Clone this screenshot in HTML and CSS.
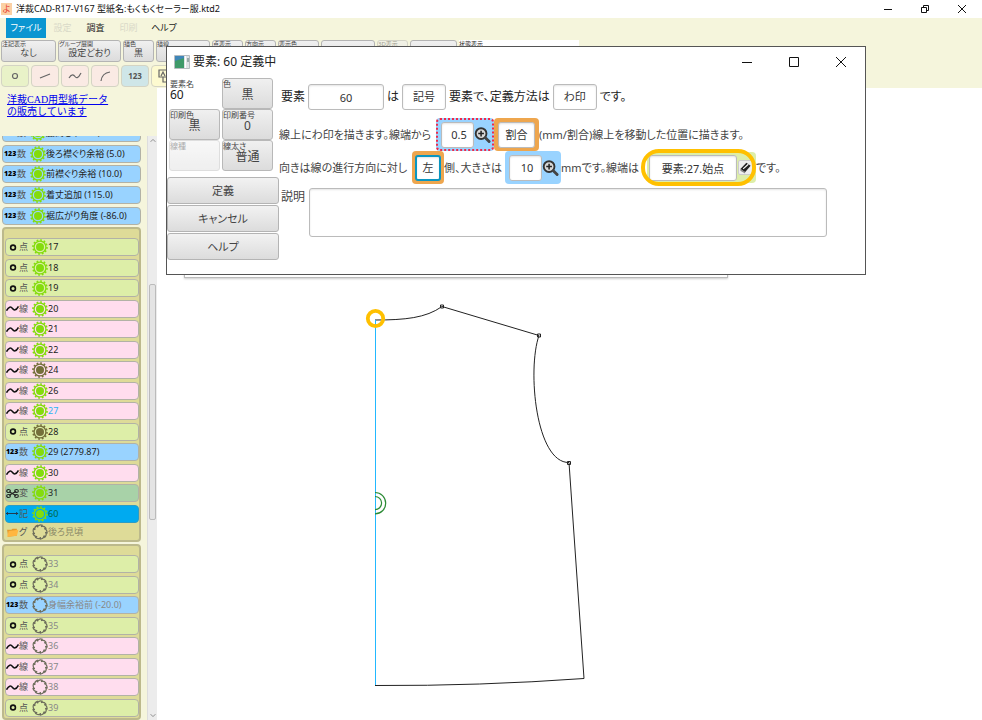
FILE: index.html
```html
<!DOCTYPE html>
<html lang="ja">
<head>
<meta charset="utf-8">
<title>洋裁CAD-R17-V167 型紙名:もくもくセーラー服.ktd2</title>
<link rel="stylesheet" href="styles.css">
</head>
<body>
<svg class="defs" aria-hidden="true">
  <symbol id="sun" viewBox="0 0 16 16">
    <circle cx="8" cy="8" r="7" fill="none" stroke="currentColor" stroke-width="1.6" stroke-dasharray="1.75 1.91"/>
    <circle cx="8" cy="8" r="5.9" fill="none" stroke="currentColor" stroke-width="1.3"/>
    <circle cx="8" cy="8" r="4" fill="currentColor"/>
  </symbol>
  <symbol id="off" viewBox="0 0 16 16">
    <g fill="none" stroke="currentColor" stroke-width="1.2">
      <path id="tooth" d="M5 2.800Q7.500.300 10.200 1.200L9.300 3"/>
      <use href="#tooth" transform="rotate(40 8 8)"/>
      <use href="#tooth" transform="rotate(80 8 8)"/>
      <use href="#tooth" transform="rotate(120 8 8)"/>
      <use href="#tooth" transform="rotate(160 8 8)"/>
      <use href="#tooth" transform="rotate(200 8 8)"/>
      <use href="#tooth" transform="rotate(240 8 8)"/>
      <use href="#tooth" transform="rotate(280 8 8)"/>
      <use href="#tooth" transform="rotate(320 8 8)"/>
    </g>
  </symbol>
  <symbol id="point" viewBox="0 0 12 10"><circle cx="6.500" cy="5" r="2.200" fill="none" stroke="#111" stroke-width="1.500"/></symbol>
  <symbol id="wave" viewBox="0 0 12 10"><path d="M.5 7C2.500 3 4.500 3 6 5s3.200 2 5.500-2" fill="none" stroke="#111" stroke-width="1.400"/></symbol>
  <symbol id="cut" viewBox="0 0 14 10"><path d="M3.500 3.200 11 7.500M3.500 6.800 11 2.500" fill="none" stroke="#222" stroke-width="1.300"/><g fill="none" stroke="#222" stroke-width="1.200"><ellipse cx="2.700" cy="2.300" rx="2" ry="1.600"/><ellipse cx="2.700" cy="7.700" rx="2" ry="1.600"/><ellipse cx="11.300" cy="2.300" rx="2" ry="1.600"/><ellipse cx="11.300" cy="7.700" rx="2" ry="1.600"/></g></symbol>
  <symbol id="arrow" viewBox="0 0 14 10"><path d="M0 5h13M2 3.500.5 5 2 6.500M11 3.500 12.500 5 11 6.500" fill="none" stroke="#234" stroke-width="1"/></symbol>
  <symbol id="folder" viewBox="0 0 12 10"><path d="M1 2.500h4l1-1h4V8L2 9z" fill="#e39a2c"/><path d="M1 9 2.500 3.500l9-1L10 8z" fill="#ffb640"/></symbol>
  <symbol id="lens" viewBox="0 0 18 18"><circle cx="7.500" cy="7.500" r="5.700" fill="#d9d9d9" stroke="#333" stroke-width="2"/><path d="M4.500 7.500h6M7.500 4.500v6" stroke="#222" stroke-width="1.600"/><path d="m12 12 4 4" stroke="#444" stroke-width="3" stroke-linecap="round"/></symbol>
</svg>

<header class="app-head">
  <div class="titlebar">
    <span class="logo">よ</span>
    <h1>洋裁CAD-R17-V167 型紙名:もくもくセーラー服.ktd2</h1>
    <div class="win-controls">
      <button aria-label="最小化"><svg viewBox="0 0 10 10"><path d="M1 5.500h8"/></svg></button>
      <button aria-label="元に戻す"><svg viewBox="0 0 10 10"><path d="M1.500 3.500h5v5h-5zM3.500 3.500v-2h5v5h-2"/></svg></button>
      <button aria-label="閉じる"><svg viewBox="0 0 10 10"><path d="m1 1 8 8M9 1 1 9"/></svg></button>
    </div>
  </div>
  <nav class="menu">
    <button class="active">ファイル</button>
    <button disabled>設定</button>
    <button>調査</button>
    <button disabled>印刷</button>
    <button>ヘルプ</button>
  </nav>
  <div class="options">
    <button class="opt o1"><small>注記表示</small>なし</button>
    <button class="opt o2"><small>グループ展開</small>設定どおり</button>
    <button class="opt o3"><small>描色</small>黒</button>
    <button class="opt o4"><small>描線</small></button>
    <button class="opt o3"><small>点表示</small></button>
    <button class="opt o3"><small>方向示</small></button>
    <button class="opt o5"><small>表示色</small></button>
    <button class="opt o4" aria-label="表示"></button>
    <button class="opt o3" disabled><small>3D表示</small></button>
    <button class="opt o6" aria-label="状態"></button>
    <div class="status"><small>状態表示</small></div>
  </div>
  <div class="tools">
    <button class="tool green" aria-label="点"><svg viewBox="0 0 16 16"><circle cx="8" cy="8" r="2.500"/></svg></button>
    <button class="tool pink" aria-label="直線"><svg viewBox="0 0 16 16"><path d="m3 10 10-4"/></svg></button>
    <button class="tool pink" aria-label="曲線"><svg viewBox="0 0 16 16"><path d="M2 10c3-5 5-3 6-1.500S11 11 14 5"/></svg></button>
    <button class="tool pink" aria-label="円弧"><svg viewBox="0 0 16 16"><path d="M4 13Q5 5 13 4"/></svg></button>
    <button class="tool blue">123</button>
    <button class="tool yellow" aria-label="注記"><svg viewBox="0 0 16 16"><path d="M2 2h8v7H2zM6 9v5h8V6h-4M4 8l2-4 2 4"/></svg></button>
  </div>
</header>

<div class="work">
  <aside class="side">
    <a class="promo" href="#">洋裁CAD用型紙データ<br>の販売しています</a>
    <div class="browser">
      <div class="lists">
        <ul class="list top">
          <li><button class="row num"><b>123</b><i>数</i><svg class="mark"><use href="#sun"/></svg>脇高さ (-10.0)</button></li>
          <li><button class="row num"><b>123</b><i>数</i><svg class="mark"><use href="#sun"/></svg>後ろ襟ぐり余裕 (5.0)</button></li>
          <li><button class="row num"><b>123</b><i>数</i><svg class="mark"><use href="#sun"/></svg>前襟ぐり余裕 (10.0)</button></li>
          <li><button class="row num"><b>123</b><i>数</i><svg class="mark"><use href="#sun"/></svg>着丈追加 (115.0)</button></li>
          <li><button class="row num"><b>123</b><i>数</i><svg class="mark"><use href="#sun"/></svg>裾広がり角度 (-86.0)</button></li>
        </ul>
        <section class="group">
          <ul class="list first">
            <li><button class="row pt"><svg class="kind"><use href="#point"/></svg><i>点</i><svg class="mark"><use href="#sun"/></svg>17</button></li>
            <li><button class="row pt"><svg class="kind"><use href="#point"/></svg><i>点</i><svg class="mark"><use href="#sun"/></svg>18</button></li>
            <li><button class="row pt"><svg class="kind"><use href="#point"/></svg><i>点</i><svg class="mark"><use href="#sun"/></svg>19</button></li>
            <li><button class="row ln"><svg class="kind"><use href="#wave"/></svg><i>線</i><svg class="mark"><use href="#sun"/></svg>20</button></li>
            <li><button class="row ln"><svg class="kind"><use href="#wave"/></svg><i>線</i><svg class="mark"><use href="#sun"/></svg>21</button></li>
            <li><button class="row ln"><svg class="kind"><use href="#wave"/></svg><i>線</i><svg class="mark"><use href="#sun"/></svg>22</button></li>
            <li><button class="row ln"><svg class="kind"><use href="#wave"/></svg><i>線</i><svg class="mark dim"><use href="#sun"/></svg>24</button></li>
            <li><button class="row ln"><svg class="kind"><use href="#wave"/></svg><i>線</i><svg class="mark"><use href="#sun"/></svg>26</button></li>
            <li><button class="row ln"><svg class="kind"><use href="#wave"/></svg><i>線</i><svg class="mark"><use href="#sun"/></svg><span class="cyan">27</span></button></li>
            <li><button class="row pt"><svg class="kind"><use href="#point"/></svg><i>点</i><svg class="mark dim"><use href="#sun"/></svg>28</button></li>
            <li><button class="row num"><b>123</b><i>数</i><svg class="mark"><use href="#sun"/></svg>29 (2779.87)</button></li>
            <li><button class="row ln"><svg class="kind"><use href="#wave"/></svg><i>線</i><svg class="mark"><use href="#sun"/></svg>30</button></li>
            <li><button class="row cv"><svg class="kind"><use href="#cut"/></svg><i>変</i><svg class="mark"><use href="#sun"/></svg>31</button></li>
            <li><button class="row current"><svg class="kind"><use href="#arrow"/></svg><i>記</i><svg class="mark"><use href="#sun"/></svg>60</button></li>
          </ul>
          <button class="row name"><svg class="kind"><use href="#folder"/></svg><i>グ</i><svg class="mark off"><use href="#off"/></svg>後ろ見頃</button>
        </section>
        <section class="group">
          <ul class="list second">
            <li><button class="row pt hid"><svg class="kind"><use href="#point"/></svg><i>点</i><svg class="mark off"><use href="#off"/></svg>33</button></li>
            <li><button class="row pt hid"><svg class="kind"><use href="#point"/></svg><i>点</i><svg class="mark off"><use href="#off"/></svg>34</button></li>
            <li><button class="row num hid"><b>123</b><i>数</i><svg class="mark off"><use href="#off"/></svg>身幅余裕前 (-20.0)</button></li>
            <li><button class="row pt hid"><svg class="kind"><use href="#point"/></svg><i>点</i><svg class="mark off"><use href="#off"/></svg>35</button></li>
            <li><button class="row ln hid"><svg class="kind"><use href="#wave"/></svg><i>線</i><svg class="mark off"><use href="#off"/></svg>36</button></li>
            <li><button class="row ln hid"><svg class="kind"><use href="#wave"/></svg><i>線</i><svg class="mark off"><use href="#off"/></svg>37</button></li>
            <li><button class="row ln hid"><svg class="kind"><use href="#wave"/></svg><i>線</i><svg class="mark off"><use href="#off"/></svg>38</button></li>
            <li><button class="row pt hid"><svg class="kind"><use href="#point"/></svg><i>点</i><svg class="mark off"><use href="#off"/></svg>39</button></li>
          </ul>
        </section>
      </div>
      <div class="scroll">
        <svg viewBox="0 0 10 10"><path d="m2 6 3-3 3 3"/></svg>
        <span class="thumb"></span>
        <svg viewBox="0 0 10 10"><path d="m2 4 3 3 3-3"/></svg>
      </div>
    </div>
  </aside>

  <main class="canvas">
    <svg width="825" height="632" viewBox="157 88 825 632" role="img" aria-label="型紙">
      <g fill="none" stroke="#222" stroke-width="1">
        <path d="M375 320C405 320 426 318 442 306.500L539 335.500C527 370 536 463 569 462.500L584 678.500Q480 686 375 685.500"/>
        <path d="M440.500 305h3v3h-3zM537.500 334h3v3h-3zM567.500 461.500h3v3h-3z"/>
      </g>
      <rect x="375" y="320" width="1" height="365" fill="#22b8ff"/>
      <path d="M375 492.500a10.700 10.700 0 0 1 0 21.400M375 496.500a6.600 6.600 0 0 1 0 13.200" fill="none" stroke="#2a8a34" stroke-width="1.200"/>
      <circle cx="375.500" cy="318.500" r="7.700" fill="none" stroke="#ffc000" stroke-width="3.800"/>
    </svg>
  </main>
</div>

<div class="under"></div>
<section class="dialog" role="dialog" aria-labelledby="dlg-title">
  <div class="dlg-bar">
    <svg class="dlg-icon" viewBox="0 0 16 14"><path fill="#dfe3e6" stroke="#b6bcc0" d="M.5.5h15v13H.5z"/><path fill="#3f86b8" d="M1 1h9v6H1z"/><path fill="#3f9a6a" d="M1 6l9-3v10H1z"/><path fill="#fff" d="M11 1h1v12h-1z"/><path fill="#9aa" d="M13 3h2v4h-2z"/></svg>
    <h2 id="dlg-title">要素: 60 定義中</h2>
    <div class="dlg-controls">
      <button aria-label="最小化"><svg viewBox="0 0 12 12"><path d="M1 6.500h10"/></svg></button>
      <button aria-label="最大化"><svg viewBox="0 0 12 12"><path d="M1.500 1.500h9v9h-9z"/></svg></button>
      <button aria-label="閉じる"><svg viewBox="0 0 12 12"><path d="m1 1 10 10M11 1 1 11"/></svg></button>
    </div>
  </div>
  <div class="dlg-body">
    <div class="left">
      <div class="props">
        <div class="prop plain"><small>要素名</small>60</div>
        <button class="prop"><small>色</small>黒</button>
        <button class="prop"><small>印刷色</small>黒</button>
        <button class="prop"><small>印刷番号</small>0</button>
        <button class="prop" disabled><small>線種</small></button>
        <button class="prop"><small>線太さ</small>普通</button>
      </div>
      <div class="actions">
        <button>定義</button>
        <button>キャンセル</button>
        <button>ヘルプ</button>
      </div>
    </div>
    <form class="form">
      <div class="line l1">
        <label for="elem">要素</label>
        <input id="elem" class="w-l" value="60">
        <span>は</span>
        <button type="button" class="pick">記号</button>
        <span>要素で、定義方法は</span>
        <button type="button" class="pick">わ印</button>
        <span>です。</span>
      </div>
      <div class="line l2">
        <label class="t1" for="ratio">線上にわ印を描きます。線端から</label>
        <div class="calc dotted"><input id="ratio" value="0.5"><button type="button" aria-label="計算"><svg><use href="#lens"/></svg></button></div>
        <div class="sel"><button type="button" class="pick">割合</button></div>
        <span>(mm/割合)線上を移動した位置に描きます。</span>
      </div>
      <div class="line l3">
        <span class="t2">向きは線の進行方向に対し</span>
        <div class="sel small"><button type="button" class="pick focus">左</button></div>
        <label class="t3" for="size">側、大きさは</label>
        <div class="calc"><input id="size" value="10"><button type="button" aria-label="計算"><svg><use href="#lens"/></svg></button></div>
        <label class="t4" for="end">mmです。線端は</label>
        <div class="ref"><input id="end" value="要素:27.始点"><button type="button" aria-label="選択"><svg viewBox="0 0 14 14"><path d="M1.500 8.500 8 2l4.500 3-6 7z" fill="#222"/><path d="m4.500 8.500 5.500-5" stroke="#fff" stroke-width="1.200"/><path d="M1.500 8.500v2l5 3v-2z" fill="#888"/></svg></button></div>
        <span>です。</span>
      </div>
      <div class="note">
        <label for="note">説明</label>
        <textarea id="note"></textarea>
      </div>
    </form>
  </div>
</section>
</body>
</html>
```
FILE: styles.css
```css
* { box-sizing: border-box; }
body {
  margin: 0;
  height: 100vh;
  display: flex;
  flex-direction: column;
  overflow: hidden;
  position: relative;
  background: #fff;
  color: #222;
  font: 9px/12px "Noto Sans", "Noto Sans CJK JP", sans-serif;
  font-feature-settings: "palt";
}
button, input, textarea { font: inherit; font-feature-settings: inherit; color: inherit; margin: 0; padding: 0; }
button { border: 0; background: none; white-space: nowrap; }
h1, h2 { margin: 0; font-weight: 400; }
ul { list-style: none; margin: 0; padding: 0; }
i { font-style: normal; }
.defs { display: none; }

.app-head { background: #f5f5dc; height: 88px; flex: none; }
.titlebar { display: flex; align-items: center; height: 18px; background: #fff; }
.logo { width: 11px; height: 12px; margin-left: 1px; background: #fbd0a4; color: #e8483c; text-align: center; }
.titlebar h1 { font-size: 9px; line-height: 16px; margin-left: 4px; color: #111; white-space: nowrap; }
.win-controls { margin-left: auto; display: flex; gap: 27px; padding-right: 15px; }
.win-controls button { width: 10px; height: 10px; }
.win-controls svg, .dlg-controls svg { display: block; fill: none; stroke: #111; stroke-width: 1; }

.menu { display: flex; height: 20px; padding-left: 6px; align-items: stretch; }
.menu button { width: 33px; }
.menu .active { background: #0a96d1; color: #fff; width: 40px; }
.menu button:last-child { width: 38px; }
.menu button:disabled { color: #d9d9c8; }

.options { display: flex; gap: 2px; padding: 2px 0 0 1px; height: 24px; overflow: hidden; }
.opt, .prop {
  position: relative;
  border: 1px solid #b4b4b4;
  border-radius: 3px;
  background: linear-gradient(#f0f0f0, #dcdcdc);
  color: #444;
}
.opt { height: 22px; padding-top: 3px; flex: none; }
.opt small, .prop small { position: absolute; left: 0; top: -1px; color: #444; }
.opt small, .status small { font-size: 6px; line-height: 8px; }
.opt:disabled { opacity: .5; }
.o1 { width: 55px; }
.o2 { width: 63px; }
.o3 { width: 31px; }
.o4 { width: 54px; }
.o5 { width: 41px; }
.o6 { width: 47px; }
.status { width: 120px; background: #fff; }
.status small { display: block; }

.tools { display: flex; gap: 2px; padding: 3px 0 0 1px; }
.tool { width: 28px; height: 22px; border: 1px solid #d4d4c4; border-radius: 4px; color: #555; font-weight: 700; font-size: 8px; display: grid; place-items: center; }
.tool svg { width: 16px; height: 16px; fill: none; stroke: #666; stroke-width: 1.2; }
.green { background: #e9f2c8; }
.pink { background: #faeae4; }
.blue { background: #cfe6e8; }
.yellow { background: #fdfad0; }

.work { flex: 1; display: flex; min-height: 0; }
.side { width: 157px; background: #f5f5dc; display: flex; flex-direction: column; flex: none; }
.promo { display: block; height: 48px; padding: 6px 0 0 7px; font: 10px/12px "Liberation Serif", "Noto Sans CJK JP", serif; color: #00e; }
.browser { flex: 1; display: flex; min-height: 0; }
.lists { width: 147px; padding-left: 2px; overflow: hidden; display: flex; flex-direction: column; justify-content: flex-start; }
.list { display: grid; grid-auto-rows: 1fr; }
.list li { display: flex; align-items: center; }
.top { margin-top: -13px; min-height: 103px; width: 139px; }
.top .row { padding-left: 1px; }
.group { width: 139px; flex: none; border: 2px solid #bcb98c; border-radius: 4px; background: #dedb98; padding: 8px 0 0 1px; margin: 1px 0 2px; }
.first { min-height: 287px; }
.second { min-height: 164px; }
.row {
  display: flex;
  align-items: center;
  width: 100%;
  height: 18px;
  border: 1px solid #b2b2a6;
  border-radius: 4px;
  text-align: left;
  color: #222;
}
.row b { width: 13px; font-size: 7px; font-weight: 900; color: #000; }
.row .kind { width: 13px; height: 11px; flex: none; }
.row i { width: 13px; color: #555; }
.mark { width: 16px; height: 16px; flex: none; color: #84dc0c; }
.dim { color: #74703a; }
.off { color: #6d6d5c; }
.num { background: #99d3ff; }
.pt { background: #ddeea8; }
.ln { background: #ffddee; }
.cv { background: #a8d2a8; }
.current { background: #00aaf0; border-color: #2c9cc4; color: #064; }
.name { height: 16px; border-color: transparent; color: #8c8a68; }
.group + .group { margin-top: 0; }
.hid { color: #888; }
.cyan { color: #2bb4f4; }

.scroll { width: 10px; background: #ececec; border-left: 1px solid #ddd; display: flex; flex-direction: column; align-items: center; }
.scroll svg { width: 8px; height: 10px; fill: none; stroke: #777; }
.thumb { width: 7px; height: 236px; margin-top: 138px; margin-bottom: auto; border: 1px solid #bbb; border-radius: 2px; background: #e4e4e4; }

.canvas { flex: 1; overflow: hidden; min-width: 0; }
.canvas svg { display: block; }

.under { position: absolute; left: 184px; top: 260px; width: 544px; height: 18px; border: 1px solid #bbb; background: #fff; box-shadow: 0 1px 2px #ccc; }
.dialog { position: absolute; left: 166px; top: 46px; width: 700px; height: 229px; background: #fff; border: 1px solid #555; font-size: 12px; line-height: 16px; color: #444; }
.dlg-bar { display: flex; align-items: center; height: 29px; padding: 0 18px 0 7px; }
.dlg-icon { width: 16px; height: 14px; }
.dlg-bar h2 { font-size: 12px; margin-left: 3px; color: #222; }
.dlg-controls { margin-left: auto; display: flex; gap: 35px; }
.dlg-controls button { width: 12px; height: 12px; }
.dlg-body { display: flex; }
.left { width: 112px; }
.props { display: grid; grid-template-columns: 51px 51px; grid-auto-rows: 31px; column-gap: 2px; padding: 2px 0 0 2px; }
.prop { display: grid; place-items: center; padding-top: 2px; font-size: 12px; line-height: 14px; border-color: #b8b8b8; }
.prop small { font-size: 8px; line-height: 11px; }
.prop:disabled { opacity: .45; }
.plain { border-color: transparent; background: none; place-items: center start; color: #222; padding-left: 0; }
.actions { display: grid; grid-auto-rows: 27px; gap: 1px; padding-top: 6px; }
.actions button { border: 1px solid #b4b4b4; border-radius: 3px; background: linear-gradient(#f2f2f2, #dcdcdc); color: #444; font-size: 11px; }

.form { flex: 1; min-width: 0; }
.line { display: flex; align-items: center; white-space: nowrap; }
.line input, .pick { height: 26px; border: 1px solid #bbb; border-radius: 3px; background: #fff; text-align: center; box-shadow: inset 0 1px 2px #e4e4e4; color: #333; font-size: 11px; }
.l1 { height: 34px; gap: 3px; padding-left: 2px; margin: 4px 0; color: #222; }
.w-l { width: 76px; }
.l1 .pick { width: 44px; }
.l2, .l3 { height: 33px; font-size: 11px; }
.calc, .ref, .sel { display: flex; align-items: center; border-radius: 4px; height: 33px; flex: none; }
.calc { width: 56px; padding-left: 4px; background: #99d3ff; }
.calc input { width: 33px; padding-left: 3px; }
.calc button { width: 17px; height: 18px; }
.calc svg { width: 17px; height: 18px; display: block; }
.dotted { border: 2px dotted #f0284a; width: 58px; padding-left: 3px; }
.sel { background: #eea64e; width: 45px; padding: 0 4px; }
.sel .pick { width: 100%; }
.small { width: 32px; padding: 0 3px; }
.focus { border: 2px solid #0a96c1; }
.t1 { width: 157px; }
.t2 { width: 133px; }
.t3 { width: 61px; }
.t4 { width: 86px; }
.ref { position: relative; width: 109px; padding-left: 2px; background: #ddeea8; height: 31px; }
.ref::after { content: ""; position: absolute; inset: -3px 0 -3px -6px; border: 4px solid #ffc000; border-radius: 18px; pointer-events: none; }
.ref input { width: 88px; }
.ref button { width: 15px; height: 15px; margin-left: 1px; border: 1px solid #ccc; border-radius: 2px; background: #eee; }
.ref button svg { display: block; }
.note { display: flex; padding-left: 2px; margin-top: 4px; }
.note label { width: 28px; padding-top: 1px; }
.note textarea { flex: 1; margin-right: 38px; height: 49px; border: 1px solid #bbb; border-radius: 3px; resize: none; box-shadow: inset 0 1px 2px #e4e4e4; }
```
